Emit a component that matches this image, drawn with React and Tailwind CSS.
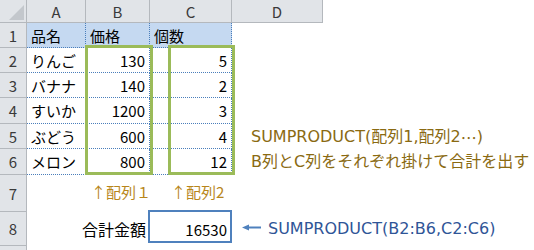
const COLS = [
  { key: 'A', w: 'w-[59px]' },
  { key: 'B', w: 'w-[64px]' },
  { key: 'C', w: 'w-[82px]' },
  { key: 'D', w: 'w-[91px]' },
]

const DATA = [
  ['りんご', '130', '5'],
  ['バナナ', '140', '2'],
  ['すいか', '1200', '3'],
  ['ぶどう', '600', '4'],
  ['メロン', '800', '12'],
]

const ROW_H = ['h-[25px]', 'h-[25px]', 'h-[26px]', 'h-[25px]', 'h-[26px]']

const dot = 'border-r border-b border-dotted border-[#4a7ebb]'
// annotation text: wide latin (Verdana-like) + CJK
const note = "font-['DejaVu_Sans','Noto_Sans_CJK_JP',sans-serif] text-[16px] whitespace-nowrap"

function RowHead({ n, h }) {
  return (
    <div className={`${h} w-[27px] shrink-0 flex items-center justify-center bg-[#e1e4e8] border-r border-b border-[#b4b8bd] text-[15px] text-[#3a3a3a]`}>
      {n}
    </div>
  )
}

export default function App() {
  return (
    <div className="relative w-[534px] h-[250px] overflow-hidden bg-white text-black font-['Noto_Sans_CJK_JP','Noto_Sans',sans-serif] leading-none">
      {/* column headers */}
      <div className="flex h-[23px]">
        <div className="relative w-[27px] shrink-0 bg-[#e1e4e8] border-r border-b border-[#b4b8bd] overflow-hidden">
          <div className="absolute right-[2px] bottom-[2px] w-0 h-0 border-l-[15px] border-l-transparent border-b-[15px] border-b-[#c3c7cc]" />
        </div>
        {COLS.map(c => (
          <div key={c.key} className={`${c.w} shrink-0 flex items-center justify-center bg-[#e1e4e8] border-r border-b border-[#b4b8bd] text-[15px] text-[#3a3a3a]`}>
            {c.key}
          </div>
        ))}
      </div>

      {/* row 1 */}
      <div className="flex h-[25px]">
        <RowHead n="1" h="h-[25px]" />
        <div className={`w-[59px] bg-[#c5d9f1] ${dot} flex items-center pl-[4px] text-[15px]`}>品名</div>
        <div className={`w-[64px] bg-[#c5d9f1] ${dot} flex items-center pl-[4px] text-[15px]`}>価格</div>
        <div className={`w-[82px] bg-[#c5d9f1] ${dot} flex items-center pl-[4px] text-[15px]`}>個数</div>
      </div>

      {/* rows 2-6 */}
      {DATA.map((r, i) => (
        <div key={i} className={`flex ${ROW_H[i]}`}>
          <RowHead n={i + 2} h={ROW_H[i]} />
          <div className={`w-[59px] ${dot} flex items-center pl-[4px] text-[15px]`}>{r[0]}</div>
          <div className={`w-[64px] ${dot} flex items-center justify-end pr-[4px] text-[15px]`}>{r[1]}</div>
          <div className={`w-[82px] ${dot} flex items-center justify-end pr-[4px] text-[15px]`}>{r[2]}</div>
          {i === 3 && (
            <div className={`pl-[19px] flex items-center text-[#8a6a12] ${note}`}>
              SUMPRODUCT(配列1,配列2<span className="font-['Noto_Sans_CJK_JP',sans-serif]">…</span>)
            </div>
          )}
          {i === 4 && (
            <div className={`pl-[19px] flex items-center text-[#8a6a12] ${note}`}>B列とC列をそれぞれ掛けて合計を出す</div>
          )}
        </div>
      ))}

      {/* row 7 */}
      <div className="flex h-[37px]">
        <RowHead n="7" h="h-[37px]" />
        <div className="w-[59px]" />
        <div className="w-[64px] flex items-center pl-[5px] pb-[4px] text-[15px] text-[#b8861a] whitespace-nowrap">↑配列１</div>
        <div className="w-[82px] flex items-center pl-[21px] pb-[4px] text-[15px] text-[#b8861a] whitespace-nowrap">↑配列2</div>
      </div>

      {/* row 8 */}
      <div className="flex h-[34px]">
        <RowHead n="8" h="h-[34px]" />
        <div className="w-[59px]" />
        <div className="w-[64px] flex items-center justify-end pr-[4px] text-[16px] whitespace-nowrap">合計金額</div>
        <div className="w-[82px] flex items-center justify-end pr-[5px] text-[15px]">16530</div>
        <div className={`flex items-center pl-[10px] gap-[7px] text-[#2f5597] ${note}`}>
          <svg width="19" height="7" viewBox="0 0 19 7" className="mb-[3px]">
            <line x1="5" y1="3.5" x2="19" y2="3.5" stroke="#4f81bd" strokeWidth="2" />
            <polygon points="0,3.5 7,0.5 7,6.5" fill="#4f81bd" />
          </svg>
          <span>SUMPRODUCT(B2:B6,C2:C6)</span>
        </div>
      </div>

      {/* row 9 */}
      <div className="flex h-[10px]">
        <RowHead n="" h="h-[10px]" />
      </div>

      {/* range outlines */}
      <div className="absolute left-[85px] top-[45px] w-[68px] h-[130px] border-[3px] border-[#9bbb59]" />
      <div className="absolute left-[168px] top-[45px] w-[67px] h-[130px] border-[3px] border-[#9bbb59]" />
      <div className="absolute left-[148px] top-[210px] w-[84px] h-[33px] border-2 border-[#4f81bd]" />
    </div>
  )
}
